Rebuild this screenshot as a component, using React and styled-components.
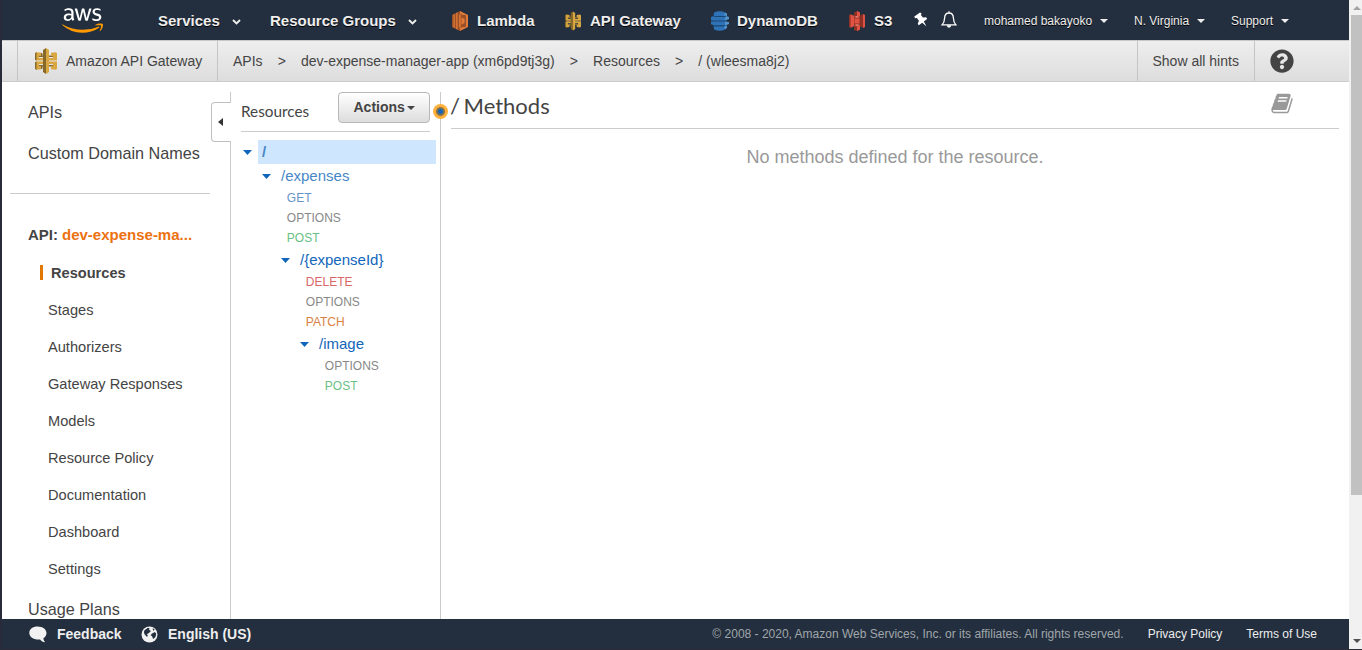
import React from "react";
import styled, { createGlobalStyle } from "styled-components";
import { FaAws, FaQuestionCircle } from "react-icons/fa";

const GlobalStyle = createGlobalStyle`
  *, *::before, *::after { box-sizing: border-box; }
  body {
    margin: 0;
    overflow: hidden;
    font-family: "Liberation Sans", Arial, sans-serif;
    color: #444;
    background: #fff;
  }
`;

const Window = styled.div`
  display: flex;
  width: 1362px;
  height: 650px;
  border-left: 2px solid #282c3a;
  border-bottom: 1px solid #2d2c36;
`;

const Console = styled.div`
  display: flex;
  flex-direction: column;
  width: 1347px;
  height: 649px;
`;

const TopNav = styled.nav`
  display: flex;
  align-items: center;
  flex: 0 0 40px;
  padding-left: 60px;
  background: #232f3e;
  color: #eee;
`;

const Logo = styled.div`
  display: flex;
  flex: 0 0 96px;
  svg { width: 41px; height: 33px; }
  svg path { fill: url(#aws-logo); }
`;

const NavLink = styled.div`
  display: flex;
  align-items: center;
  flex: 0 0 ${(p) => p.$width}px;
  height: 40px;
  font-size: ${(p) => (p.$small ? 12 : 15)}px;
  font-weight: ${(p) => (p.$small ? 400 : 700)};
  text-shadow: 0 1px 0 #000;
  white-space: nowrap;
  padding-top: ${(p) => (p.$small ? 2 : p.$service ? 1 : 0)}px;
  svg { flex: none; }
`;

const ServiceIcon = styled.span`
  display: flex;
  width: ${(p) => p.$width || 25}px;
  flex: none;
`;

const NavChevron = styled.svg`
  margin-left: 12px;
  margin-top: 3px;
`;

const NavCaret = styled.i`
  margin-left: 8px;
  margin-top: -1px;
  border: 4px solid transparent;
  border-top-color: #eee;
  border-bottom: 0;
`;

const NavIcon = styled.span`
  display: flex;
  flex: 0 0 ${(p) => p.$width}px;
`;

const Breadcrumbs = styled.div`
  display: flex;
  flex: 0 0 42px;
  padding-left: 15px;
  border-top: 1px solid #c8c8c8;
  border-bottom: 1px solid #ccc;
  background: linear-gradient(#eee, #ddd);
  font-size: 14px;
  color: #444;
`;

const ServiceCell = styled.div`
  display: flex;
  align-items: center;
  gap: 8px;
  width: 201px;
  padding-left: 16px;
  border: 1px solid #c5c5c5;
  border-width: 0 1px;
`;

const Trail = styled.div`
  display: flex;
  align-items: center;
  gap: 15.1px;
  flex: 1;
  padding-left: 15px;
`;

const BarCell = styled.div`
  display: flex;
  align-items: center;
  width: ${(p) => p.$width}px;
  padding-left: ${(p) => p.$pad}px;
  border-left: 1px solid #c5c5c5;
`;

const Body = styled.div`
  display: flex;
  flex: 1;
  min-height: 0;
  overflow: hidden;
`;

const Sidebar = styled.aside`
  flex: 0 0 228px;
  padding-top: 10px;
`;

const SideLink = styled.div`
  display: flex;
  align-items: center;
  height: ${(p) => p.$height || 41}px;
  padding-left: 26px;
  font-size: 16.2px;
`;

const SideRule = styled.hr`
  width: 200px;
  margin: 19px 0 21px 8px;
  border: 0;
  border-top: 1px solid #ccc;
`;

const ApiName = styled.div`
  display: flex;
  align-items: center;
  gap: 4px;
  height: 38px;
  margin-bottom: 1px;
  padding-left: 26px;
  font-size: 15px;
  font-weight: 700;
  b { color: #ec7211; }
`;

const SubLink = styled.div`
  display: flex;
  align-items: center;
  height: 37px;
  padding-left: ${(p) => (p.$active ? 38 : 46)}px;
  font-size: 14.6px;
  font-weight: ${(p) => (p.$active ? 700 : 400)};
  &::before {
    content: "";
    display: ${(p) => (p.$active ? "block" : "none")};
    width: 3px;
    height: 15px;
    margin-right: 8px;
    background: #e07700;
  }
`;

const TreePanel = styled.section`
  position: relative;
  flex: 0 0 211px;
  margin-top: 10px;
  border: 1px solid #ccc;
  border-width: 0 1px;
`;

const CollapseTab = styled.button`
  position: absolute;
  left: -20px;
  top: 10px;
  display: flex;
  align-items: center;
  width: 20px;
  height: 40px;
  padding: 0 0 0 6px;
  border: 1px solid #c0c0c0;
  border-right: 0;
  border-radius: 4px 0 0 4px;
  background: #fff;
  i {
    border: 4px solid transparent;
    border-right: 5px solid #333;
    border-left: 0;
  }
`;

const ResizeDot = styled.span`
  position: absolute;
  right: -8px;
  top: 12px;
  width: 15px;
  height: 15px;
  border-radius: 50%;
  background: radial-gradient(circle, #1166bb 0 2px, #80704d 3px 4px, #ffb03b 4.8px);
`;

const TreeHeader = styled.header`
  display: flex;
  justify-content: space-between;
  width: 189px;
  height: 40px;
  margin-left: 10px;
  border-bottom: 1px solid #ccc;
  font: 15.3px/38px Lato, sans-serif;
`;

const ActionsButton = styled.button`
  display: flex;
  align-items: center;
  gap: 2px;
  width: 92px;
  height: 31px;
  padding: 0 0 1px 14.5px;
  border: 1px solid #b8b8b8;
  border-radius: 4px;
  background: linear-gradient(#fff, #ddd);
  font: bold 14px "Liberation Sans", sans-serif;
  color: #444;
  i {
    margin-top: 1px;
    border: 4px solid transparent;
    border-top-color: #444;
    border-bottom: 0;
  }
`;

const Tree = styled.div`
  padding-top: 8px;
`;

const ResourceRow = styled.div`
  display: flex;
  align-items: center;
  height: 24px;
  padding-left: ${(p) => 12 + p.$depth * 19}px;
  font-size: 15px;
  color: ${(p) => (p.$faded ? "#4787c7" : "#1166bb")};
`;

const TreeCaret = styled.svg`
  flex: none;
  margin-right: 6px;
  fill: #1166bb;
`;

const ResourceName = styled.span`
  flex: 1;
  height: 24px;
  margin-right: 4px;
  padding-left: 4px;
  line-height: 24px;
  font-weight: ${(p) => (p.$selected ? 700 : 400)};
  background: ${(p) => (p.$selected ? "#cfe6ff" : "transparent")};
`;

const methodColors = {
  GET: "#6695c7",
  OPTIONS: "#888",
  POST: "#6abf85",
  DELETE: "#d96767",
  PATCH: "#d97f44",
};

const MethodRow = styled.div`
  height: 20px;
  padding-left: ${(p) => 36.8 + p.$depth * 19}px;
  font-size: 12px;
  line-height: 20px;
  color: ${(p) => methodColors[p.$method]};
`;

const Main = styled.main`
  flex: 1;
  padding: 5px 10px 0;
`;

const MainHeader = styled.header`
  display: flex;
  justify-content: space-between;
  height: 42px;
  padding-right: 46px;
  border-bottom: 1px solid #ccc;
`;

const Title = styled.h1`
  margin: 0 0 0 -1px;
  font: 22px/38px Lato, sans-serif;
  word-spacing: -2px;
`;

const BookIcon = styled.svg`
  width: 22px;
  height: 23px;
  margin-top: 4.5px;
  fill: #999;
`;

const Empty = styled.p`
  margin: 18px 0 0;
  text-align: center;
  font-size: 18px;
  line-height: 20px;
  color: #999;
`;

const Footer = styled.footer`
  display: flex;
  align-items: center;
  flex: 0 0 30px;
  padding: 0 32px 0 27px;
  background: #232f3e;
  color: #eee;
  font-size: 12px;
`;

const FooterAction = styled.div`
  display: flex;
  align-items: center;
  width: ${(p) => p.$width}px;
  gap: 10px;
  font-size: 14px;
  font-weight: 700;
`;

const Legal = styled.div`
  display: flex;
  gap: 24px;
  margin-left: auto;
  span { color: #a0a6ab; }
`;

const ScrollTrack = styled.div`
  display: flex;
  flex-direction: column;
  align-items: center;
  width: 13px;
  padding-left: 2px;
  background: #f1f1f1;
`;

const ScrollArrow = styled.i`
  flex: none;
  margin: ${(p) => (p.$down ? "auto 0 6px" : "6px 0 5px")};
  border: 4px solid transparent;
  border-${(p) => (p.$down ? "top" : "bottom")}-color: ${(p) => (p.$down ? "#505050" : "#a3a3a3")};
  border-${(p) => (p.$down ? "bottom" : "top")}: 0;
`;

const ScrollThumb = styled.div`
  width: 11px;
  height: 480px;
  background: #c1c1c1;
`;

const Chevron = () => (
  <NavChevron width="9" height="6" viewBox="0 0 9 6">
    <path d="M1 1l3.500 3.500L8 1" fill="none" stroke="#eee" strokeWidth="1.900" />
  </NavChevron>
);

const LambdaIcon = () => (
  <svg width="16" height="20" viewBox="0 0 16 20">
    <path fill="#9d5025" d="M0 4l8-4v20l-8-4z" />
    <path fill="#e27b38" d="M1.500 3.300l1.200-.6v14.600l-1.200-.6zM4.200 2l1.300-.7v17.400L4.200 18zM8 0l8 4v12l-8 4v-3.500l5.500-1V4.500L8 3.500z" />
    <path fill="#9d5025" d="M8 3.500l5.500 1v11L8 16.500z" />
    <path fill="#e27b38" d="M7.200 3.500h1.500v13H7.200zM9.500 6.500l3 1.500v4l-3 1.500z" />
  </svg>
);

const GatewayIcon = ({ width = 16, height = 20 }) => (
  <svg width={width} height={height} viewBox="0 0 22 26">
    <path fill="#876929" d="M0 5l2-1v8.500l-2-.5zM0 14l2-.5V22l-2-1zM8 2l3-2v26l-3-2zM4 7.500h4V9H4zM4 17h4v1.500H4zM14 7.500h4V9h-4zM14 17h4v1.500h-4zM6 4.700l1.500.8v2H6zM6 21.300l1.500-.8v-2H6z" />
    <path fill="#d9a741" d="M1.500 4.200L6 4.700v3H4V10h4v2.500H1.500zM1.500 13.500H8V16H4v2.300h2v3l-4.500.5zM11 0l3 2v22l-3 2zM20.500 4.200L16 4.700v3h2V10h-4v2.500h8V5zM20.500 21.800l-4.500-.5v-3h2V16h-4v-2.500h8V21z" />
  </svg>
);

const DynamoIcon = () => (
  <svg width="18" height="20" viewBox="0 0 18 20">
    <path fill="#1a476f" d="M2 3h14v14H2z" />
    <path fill="#2e73b8" d="M3 1.500Q9-1 14 1.500V5H3zM0 6l3-1v4.500H0zM3 6h11v3.500H3zM0 10.500h14v3.800H3l-3-1zM3 15.500h11v3Q9 21 3 18.500z" />
    <path fill="#5294cf" d="M14 1.500l2 1V5l-3-.5zM15 5l3 1v2l-4 1.500V7zM14 10.500l4 .5v2l-4 1.500zM13 15.500l3-1V17l-2 1.500z" />
  </svg>
);

const S3Icon = () => (
  <svg width="16" height="20" viewBox="0 0 16 20">
    <path fill="#8c3123" d="M0 4l2-1v14l-2-1zM2 5h12v10H2zM5 1.500L8 0l3 1.500V19l-3 1-3-1zM11 4.500L14 3v14l-3-1.500z" />
    <path fill="#e05243" d="M1.500 3.300L5 4.800v10.400l-3.500 1.500zM8 0l3 1.500V5L8 5.500zM8 15l3-.5v4L8 20zM14 3l2 1v12l-2 1zM5.500 7.500h5v5h-5z" />
    <path fill="#f2877c" d="M5 6l3-1 3 1-3 .8zM5 14l3-.8 3 .8-3 1z" />
  </svg>
);

const PinIcon = () => (
  <svg width="14" height="16" viewBox="0 0 14 16">
    <path fill="#fff" d="M.3 4.500L6 .6l1.600.8-.7 1.700 2 2.500 3.300-.3.900 1.700-3.300 2.600 2.700 4.900-4.200-3.700-3.600 2.400-.9-1.400 1.100-3.100-2-2.600-1.900.2z" />
  </svg>
);

const BellIcon = () => (
  <svg width="16" height="18" viewBox="0 0 16 18" fill="none" stroke="#fff" strokeWidth="1.300">
    <path d="M8 2C4.900 2 3.700 4.300 3.600 7c-.1 3.500-.9 5.200-2.500 6.900h13.800c-1.600-1.700-2.400-3.400-2.500-6.900C12.300 4.300 11.100 2 8 2zM8 .3V2" />
    <path fill="#fff" stroke="none" d="M5.800 14.300h4.400a2.200 2.400 0 01-4.400 0z" />
  </svg>
);

const SpeechIcon = () => (
  <svg width="18" height="17" viewBox="0 0 18 17">
    <path fill="#f2f2f2" d="M8.600.5C13.500.5 17.500 3.300 17.500 7c0 2.300-1.200 4-3.100 5.200.1 1.600.8 2.900 1.900 4-2.300-.1-4.100-1.100-5.300-2.700C5 14.100.3 11 .3 7S3.700.5 8.600.5z" />
  </svg>
);

const GlobeIcon = () => (
  <svg width="17" height="17" viewBox="0 0 17 17">
    <circle cx="8.500" cy="8.500" r="8" fill="#f2f2f2" />
    <path fill="#232f3e" d="M3.500 4.200L7 1.800l1.700.6-.8 1.400L10 5 8.200 6.700 5.900 8.300 7 10l-1.200.8-2.300-2.500L2.900 6zM11.500 2.200l2.300 1.300-1.500 1.200zM11 7.500l3-1.500 1.300 2-1 3.300-2.200 1.700-1-2.800-1.500-1z" />
  </svg>
);

const resources = [
  { name: "/", methods: [], selected: true, faded: true },
  { name: "/expenses", methods: ["GET", "OPTIONS", "POST"], faded: true },
  { name: "/{expenseId}", methods: ["DELETE", "OPTIONS", "PATCH"] },
  { name: "/image", methods: ["OPTIONS", "POST"] },
];

const apiSections = [
  "Resources", "Stages", "Authorizers", "Gateway Responses", "Models",
  "Resource Policy", "Documentation", "Dashboard", "Settings",
];

export default function App() {
  return (
    <Window>
      <GlobalStyle />
      <Console>
        <TopNav>
          <Logo>
            <svg style={{ position: "absolute", width: 0, height: 0 }}>
              <linearGradient id="aws-logo" x1="0" y1="0" x2="0" y2="1">
                <stop offset="0.610" stopColor="#fff" />
                <stop offset="0.610" stopColor="#f90" />
              </linearGradient>
            </svg>
            <FaAws />
          </Logo>
          <NavLink $width={112}>Services<Chevron /></NavLink>
          <NavLink $width={182}>Resource Groups<Chevron /></NavLink>
          <NavLink $service $width={113}><ServiceIcon><LambdaIcon /></ServiceIcon>Lambda</NavLink>
          <NavLink $service $width={146}><ServiceIcon><GatewayIcon /></ServiceIcon>API Gateway</NavLink>
          <NavLink $service $width={138}><ServiceIcon $width={26}><DynamoIcon /></ServiceIcon>DynamoDB</NavLink>
          <NavLink $service $width={65}><ServiceIcon><S3Icon /></ServiceIcon>S3</NavLink>
          <NavIcon $width={27}><PinIcon /></NavIcon>
          <NavIcon $width={43}><BellIcon /></NavIcon>
          <NavLink $small $width={150}>mohamed bakayoko<NavCaret /></NavLink>
          <NavLink $small $width={97}>N. Virginia<NavCaret /></NavLink>
          <NavLink $small $width={70}>Support<NavCaret /></NavLink>
        </TopNav>
        <Breadcrumbs>
          <ServiceCell><GatewayIcon width={24} height={26} />Amazon API Gateway</ServiceCell>
          <Trail>
            <span>APIs</span><span>&gt;</span>
            <span>dev-expense-manager-app (xm6pd9tj3g)</span><span>&gt;</span>
            <span>Resources</span><span>&gt;</span>
            <span>/ (wleesma8j2)</span>
          </Trail>
          <BarCell $width={117} $pad={14.5}>Show all hints</BarCell>
          <BarCell $width={95} $pad={15}><FaQuestionCircle size={24} /></BarCell>
        </Breadcrumbs>
        <Body>
          <Sidebar>
            <SideLink>APIs</SideLink>
            <SideLink>Custom Domain Names</SideLink>
            <SideRule />
            <ApiName>API: <b>dev-expense-ma...</b></ApiName>
            {apiSections.map((s) => (
              <SubLink key={s} $active={s === "Resources"}>{s}</SubLink>
            ))}
            <SideLink $height={44}>Usage Plans</SideLink>
          </Sidebar>
          <TreePanel>
            <CollapseTab aria-label="Collapse"><i /></CollapseTab>
            <TreeHeader>
              Resources
              <ActionsButton>Actions<i /></ActionsButton>
            </TreeHeader>
            <Tree>
              {resources.map((r, depth) => (
                <React.Fragment key={r.name}>
                  <ResourceRow $depth={depth} $faded={r.faded}>
                    <TreeCaret width="9" height="5" viewBox="0 0 9 5"><path d="M0 0h9L4.500 5z" /></TreeCaret>
                    <ResourceName $selected={r.selected}>{r.name}</ResourceName>
                  </ResourceRow>
                  {r.methods.map((m) => (
                    <MethodRow key={m} $depth={depth} $method={m}>{m}</MethodRow>
                  ))}
                </React.Fragment>
              ))}
            </Tree>
            <ResizeDot />
          </TreePanel>
          <Main>
            <MainHeader>
              <Title>/ Methods</Title>
              <BookIcon viewBox="0 0 1664 1792">
                <path d="M1639 478q40 57 18 129l-275 906q-19 64-76.500 107.500t-122.500 43.500h-923q-77 0-148.500-53.500t-99.500-131.500q-24-67-2-127 0-4 3-27t4-37q1-8-3-21.500t-3-19.500q2-11 8-21t16.500-23.500 16.500-23.500q23-38 45-91.500t30-91.500q3-10 .5-30t-.5-28q3-11 17-28t17-23q21-36 42-92t25-90q1-9-2.500-32t.5-28q4-13 22-30.500t22-22.500q19-26 42.500-84.500t27.500-96.500q1-8-3-25.500t-2-26.500q2-8 9-18t18-23 17-21q8-12 16.500-30.500t15-35 16-36 19.500-32 26.500-23.500 36-11.500 47.500 5.500l-1 3q38-9 51-9h761q74 0 114 56t18 130l-274 906q-36 119-71.500 153.500t-128.500 34.500h-869q-27 0-38 15-11 16-1 43 24 70 144 70h923q29 0 56-15.500t35-41.500l300-987q7-22 5-57 38 15 59 43zm-1064 2q-4 13 2 22.500t20 9.500h608q13 0 25.500-9.500t16.500-22.500l21-64q4-13-2-22.500t-20-9.500h-608q-13 0-25.500 9.500t-16.500 22.500zm-83 256q-4 13 2 22.500t20 9.500h608q13 0 25.500-9.500t16.500-22.500l21-64q4-13-2-22.500t-20-9.500h-608q-13 0-25.500 9.500t-16.500 22.500z" />
              </BookIcon>
            </MainHeader>
            <Empty>No methods defined for the resource.</Empty>
          </Main>
        </Body>
        <Footer>
          <FooterAction $width={112}><SpeechIcon />Feedback</FooterAction>
          <FooterAction $width={130}><GlobeIcon />English (US)</FooterAction>
          <Legal>
            <span>© 2008 - 2020, Amazon Web Services, Inc. or its affiliates. All rights reserved.</span>
            <div>Privacy Policy</div>
            <div>Terms of Use</div>
          </Legal>
        </Footer>
      </Console>
      <ScrollTrack>
        <ScrollArrow />
        <ScrollThumb />
        <ScrollArrow $down />
      </ScrollTrack>
    </Window>
  );
}
